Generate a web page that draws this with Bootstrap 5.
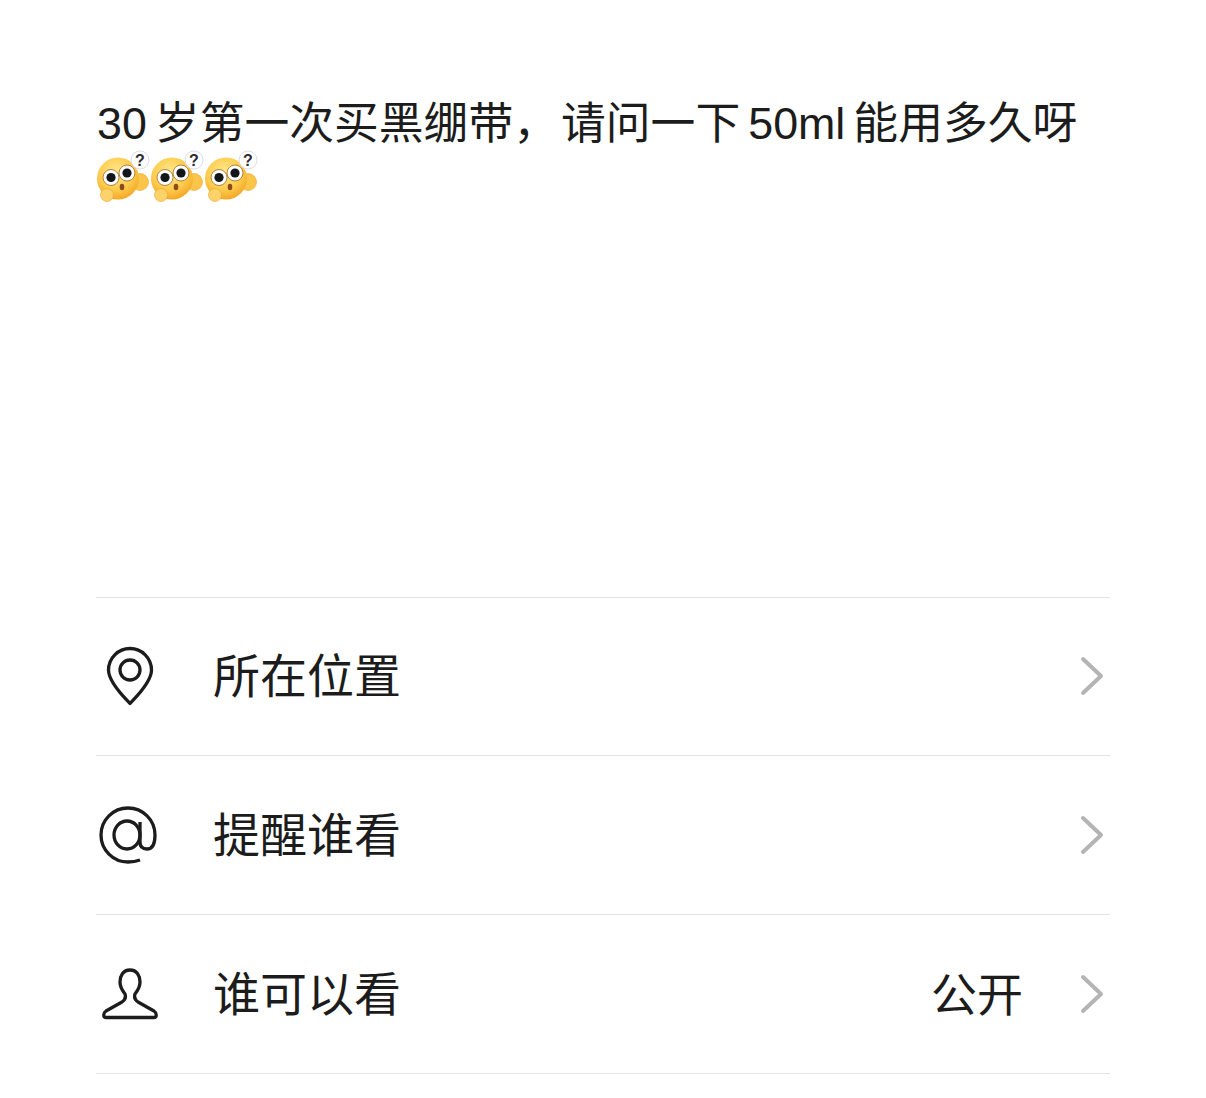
<!DOCTYPE html>
<html lang="zh-CN">
<head>
  <meta charset="UTF-8">
  <meta name="viewport" content="width=device-width, initial-scale=1.0">
  <title>发表</title>
  <link href="https://cdn.jsdelivr.net/npm/bootstrap@5.3.2/dist/css/bootstrap.min.css" rel="stylesheet">
  <style>
    body {
      background: #fff;
      color: #1c1c1c;
      font-family: "Liberation Sans", "Noto Sans CJK SC", sans-serif;
      overflow: hidden;
    }
    .post-wrap {
      padding: 0 96px;
    }
    .post-text {
      height: 596.6px;
      padding-top: 96px;
      font-size: 44.8px;
      line-height: 54px;
      margin: 0;
      padding-left: 1px;
    }
    .thin {
      margin-right: 8px;
    }
    .tail {
      margin-right: 3px;
    }
    .emoji {
      width: 54px;
      height: 54px;
      vertical-align: top;
    }
    .opt-list {
      border-top: 1px solid #e3e3e3;
    }
    .opt-row {
      height: 158.8px;
      border-bottom: 1px solid #e3e3e3;
      font-size: 47px;
    }
    .opt-label {
      position: relative;
      top: 1px;
    }
    .opt-icon {
      width: 117px;
      flex-shrink: 0;
    }
    .opt-icon svg {
      display: block;
    }
    .opt-value {
      margin-right: 57px;
      font-size: 46px;
    }
    .chev {
      margin-right: 6px;
      display: block;
    }
  </style>
</head>
<body>
  <svg width="0" height="0" class="d-block position-absolute">
    <defs>
      <radialGradient id="faceFill" cx="45%" cy="35%" r="70%">
        <stop offset="0" stop-color="#ffe98f"/>
        <stop offset="0.6" stop-color="#fdcb4c"/>
        <stop offset="1" stop-color="#f3a01f"/>
      </radialGradient>
      <symbol id="thinkFace" viewBox="0 0 54 54">
        <circle cx="43" cy="32" r="8.500" fill="#fbc54a" stroke="#eda52a" stroke-width=".6"/>
        <circle cx="21" cy="28.500" r="21" fill="url(#faceFill)"/>
        <circle cx="10" cy="45" r="6.500" fill="#fcd36a" stroke="#eda52a" stroke-width=".6"/>
        <circle cx="14" cy="27.500" r="8" fill="#fff" stroke="#a9742a" stroke-width=".9"/>
        <circle cx="14" cy="27.500" r="4.600" fill="#15151c"/>
        <circle cx="30" cy="23" r="8" fill="#fff" stroke="#a9742a" stroke-width=".9"/>
        <circle cx="30" cy="23" r="4.600" fill="#15151c"/>
        <ellipse cx="25" cy="37" rx="2.300" ry="3.200" fill="#8a4b20"/>
        <circle cx="43" cy="10" r="9" fill="#fff" stroke="#dcdce6" stroke-width="1"/>
        <text x="43" y="15.500" text-anchor="middle" font-size="16" font-weight="700" font-family="Liberation Sans" fill="#2b2b33">?</text>
      </symbol>
    </defs>
  </svg>

  <div class="post-wrap">
    <p class="post-text">30<span class="thin"></span>岁第一次买黑绷带，<span class="tail"></span>请问一下<span class="thin"></span>50ml<span class="thin"></span>能用多久呀<svg class="emoji"><use href="#thinkFace"/></svg><svg class="emoji"><use href="#thinkFace"/></svg><svg class="emoji"><use href="#thinkFace"/></svg></p>

    <div class="opt-list">
      <div class="opt-row d-flex align-items-center">
        <div class="opt-icon">
          <svg width="68" height="60" viewBox="0 0 68 60" fill="none" stroke="#1c1c1c" stroke-width="3.300">
            <path d="M34 57.500 C31 54 12.500 37 12.500 24 A21.500 21.500 0 0 1 55.500 24 C55.500 37 37 54 34 57.500Z" stroke-linejoin="round"/>
            <circle cx="34" cy="24" r="10"/>
          </svg>
        </div>
        <span class="opt-label flex-grow-1">所在位置</span>
        <svg class="chev" width="24" height="40" viewBox="0 0 24 40" fill="none" stroke="#b4b4b4" stroke-width="4" stroke-linecap="round" stroke-linejoin="round"><path d="M3 3 L21 20 L3 37"/></svg>
      </div>
      <div class="opt-row d-flex align-items-center">
        <div class="opt-icon">
          <svg width="68" height="60" viewBox="0 0 68 60" fill="none" stroke="#1c1c1c" stroke-width="3.300">
            <path d="M44 55 C40 56.500 36 57 32 57 A27 27 0 1 1 59 30 C59 39 56 44 51 44 C46 44 44 41 44 37 L44 17"/>
            <ellipse cx="31" cy="30" rx="13" ry="14"/>
          </svg>
        </div>
        <span class="opt-label flex-grow-1">提醒谁看</span>
        <svg class="chev" width="24" height="40" viewBox="0 0 24 40" fill="none" stroke="#b4b4b4" stroke-width="4" stroke-linecap="round" stroke-linejoin="round"><path d="M3 3 L21 20 L3 37"/></svg>
      </div>
      <div class="opt-row d-flex align-items-center">
        <div class="opt-icon">
          <svg width="68" height="60" viewBox="0 0 68 60" fill="none" stroke="#1c1c1c" stroke-width="3.300" stroke-linejoin="round">
            <path d="M34 6 C27 6 24 12 24 18 C24 24 27 27 29 30 C30 33 29 36 26 38 L10 47 C7 49 7 53.500 10 53.500 L58 53.500 C61 53.500 61 49 58 47 L42 38 C39 36 38 33 39 30 C41 27 44 24 44 18 C44 12 41 6 34 6Z"/>
          </svg>
        </div>
        <span class="opt-label flex-grow-1">谁可以看</span>
        <span class="opt-label opt-value">公开</span>
        <svg class="chev" width="24" height="40" viewBox="0 0 24 40" fill="none" stroke="#b4b4b4" stroke-width="4" stroke-linecap="round" stroke-linejoin="round"><path d="M3 3 L21 20 L3 37"/></svg>
      </div>
    </div>
  </div>

  <script src="https://cdn.jsdelivr.net/npm/bootstrap@5.3.2/dist/js/bootstrap.bundle.min.js"></script>
</body>
</html>
